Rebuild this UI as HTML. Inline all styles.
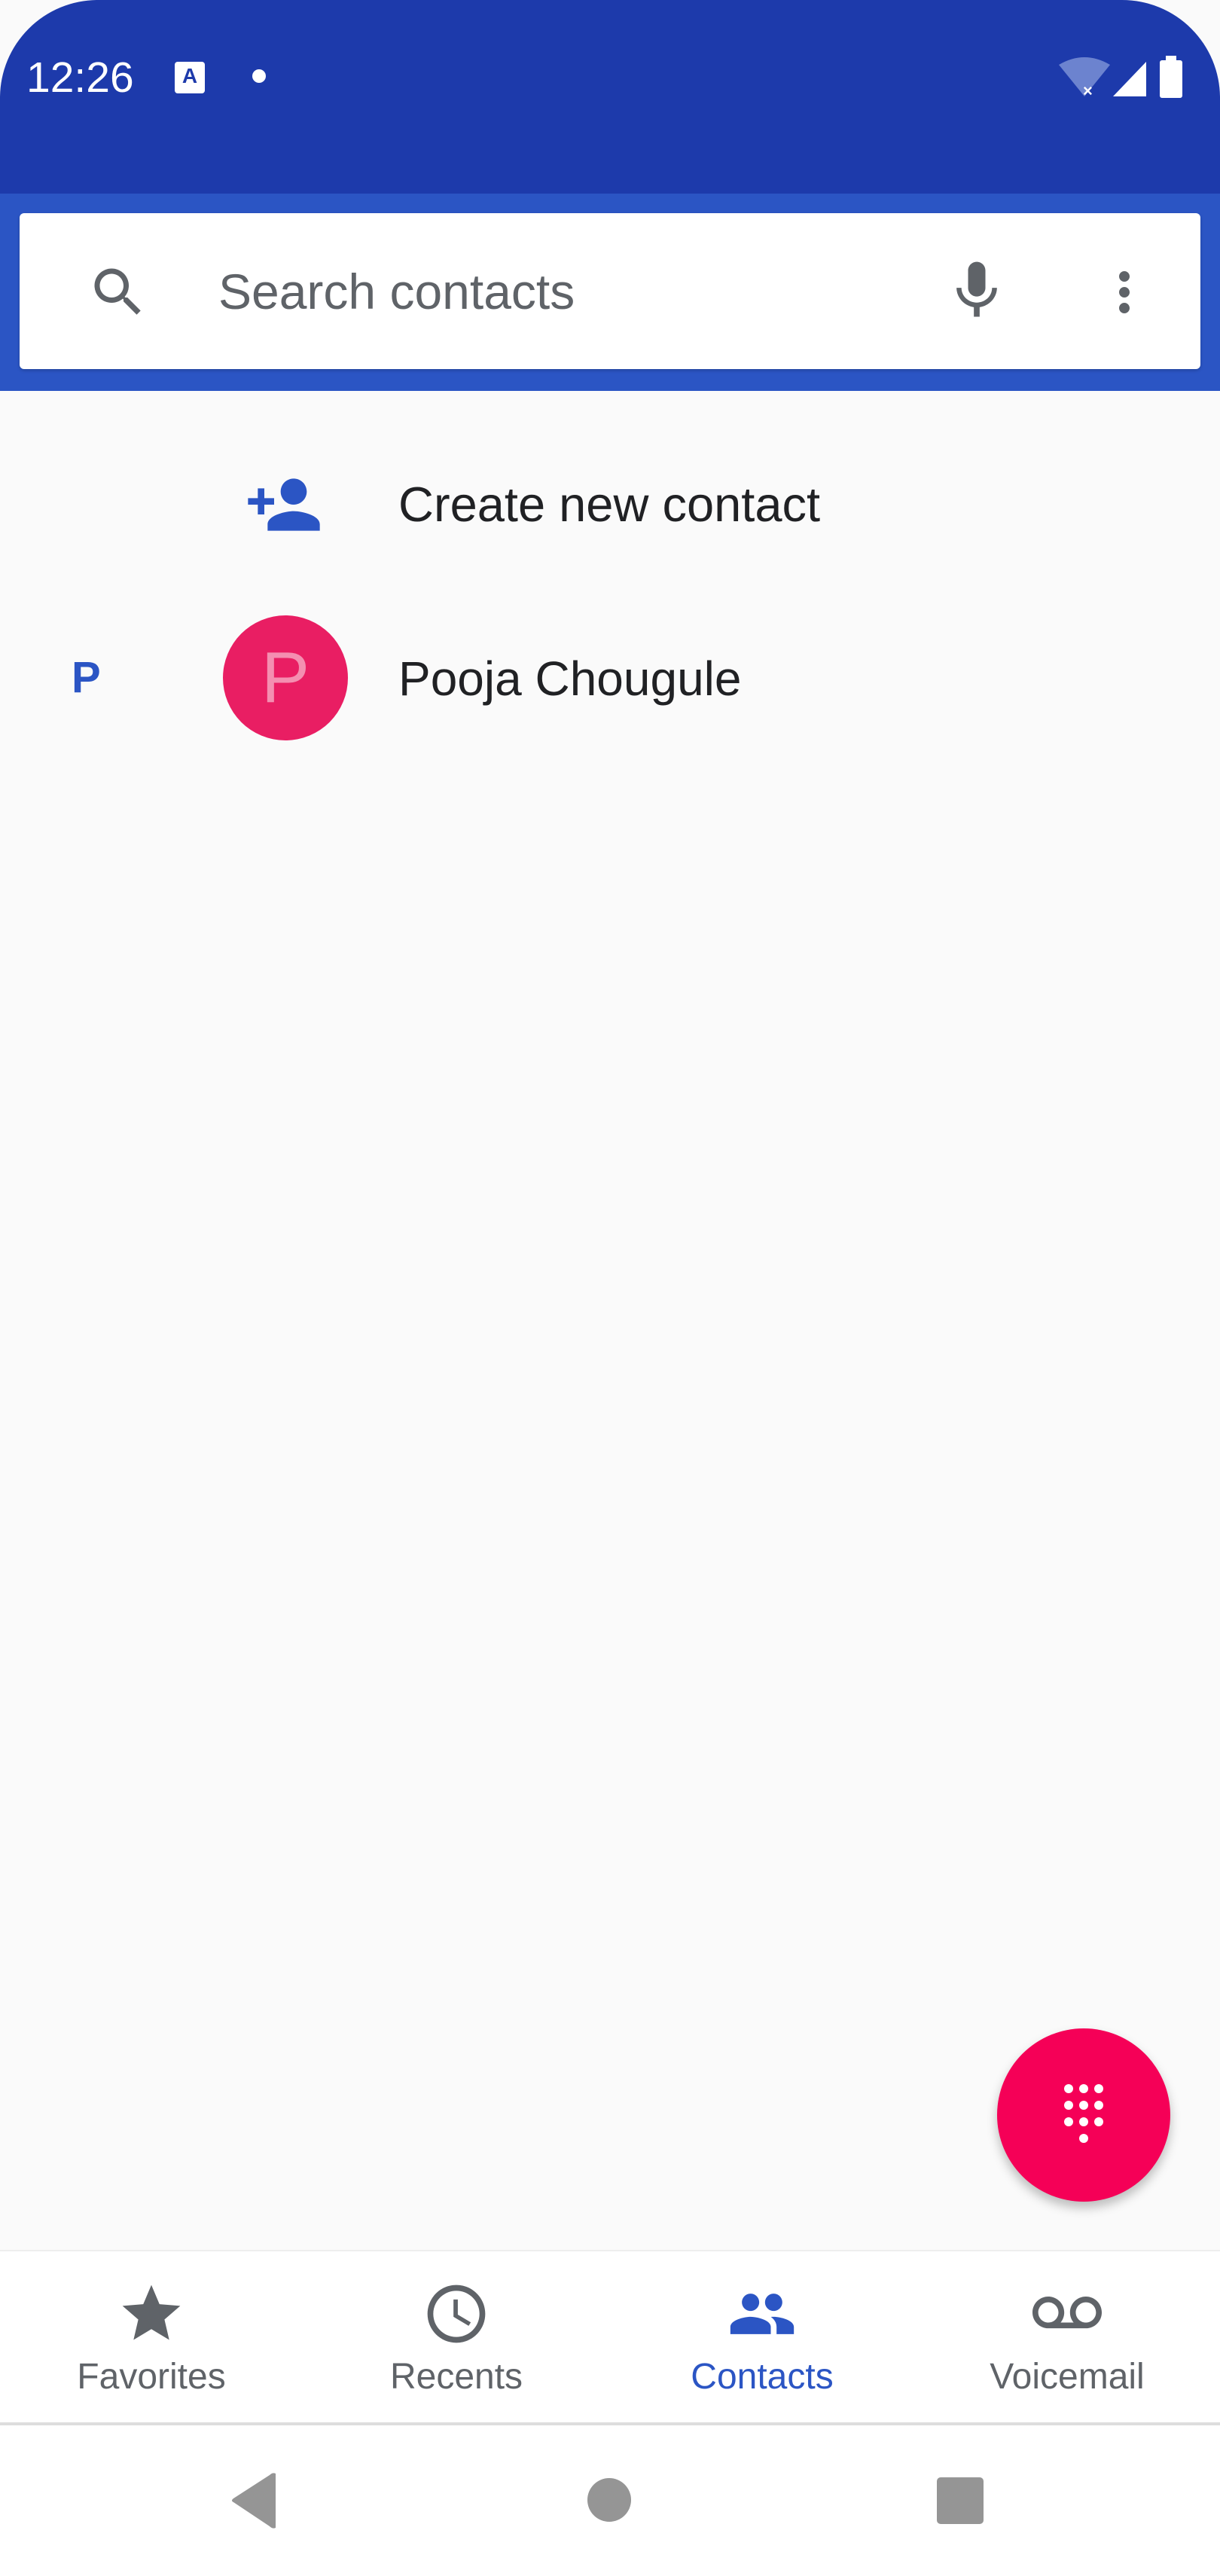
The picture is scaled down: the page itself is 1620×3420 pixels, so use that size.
<!DOCTYPE html>
<html><head><meta charset="utf-8"><style>
*{margin:0;padding:0;box-sizing:border-box}
body{width:1620px;height:3420px;background:#fff;font-family:"Liberation Sans",sans-serif;position:relative;overflow:hidden}
.abs{position:absolute}
</style></head><body>
<div class="abs" style="left:0;top:0;width:1620px;height:3000px;background:#fafafa"></div>
<div class="abs" style="left:0;top:0;width:1620px;height:257px;background:#1d3aab;border-radius:130px 130px 0 0"></div>
<div class="abs" style="left:0;top:257px;width:1620px;height:262px;background:#2b55c4"></div>
<div class="abs" style="left:35px;top:70px;color:#fff;font-size:57px">12:26</div>
<div class="abs" style="left:232px;top:82px;width:40px;height:42px;background:#fff;border-radius:4px;color:#1d3aab;font-size:28px;font-weight:bold;text-align:center;line-height:38px">A</div>
<div class="abs" style="left:335px;top:92px;width:18px;height:18px;background:#fff;border-radius:50%"></div>
<svg class="abs" style="left:1400px;top:72px" width="200" height="62" viewBox="0 0 200 62">
<path d="M6 14 Q40 -6 74 14 L40 56 Z" fill="#6c83cf"/>
<text x="38" y="56" fill="#fff" font-size="22" font-family="Liberation Sans" font-weight="bold">×</text>
<path d="M78 56 L122 10 L122 56 Z" fill="#fff"/>
<rect x="140" y="8" width="30" height="50" rx="3" fill="#fff"/><rect x="148" y="2" width="14" height="8" fill="#fff"/>
</svg>
<div class="abs" style="left:26px;top:283px;width:1568px;height:207px;background:#fff;border-radius:6px;box-shadow:0 2px 4px rgba(0,0,0,.2)"></div>
<svg class="abs" style="left:115px;top:346px" width="84" height="84" viewBox="0 0 24 24"><path fill="#5f6368" d="M15.5 14h-.79l-.28-.27A6.47 6.47 0 0 0 16 9.5 6.5 6.5 0 1 0 9.5 16c1.61 0 3.09-.59 4.23-1.57l.27.28v.79l5 4.99L20.49 19l-4.99-5zm-6 0C7.01 14 5 11.99 5 9.5S7.01 5 9.5 5 14 7.01 14 9.5 11.99 14 9.5 14z"/></svg>
<div class="abs" style="left:290px;top:349px;font-size:66px;color:#5f6368">Search contacts</div>
<svg class="abs" style="left:1251px;top:340px" width="92" height="92" viewBox="0 0 24 24"><path fill="#5f6368" d="M12 14c1.66 0 3-1.34 3-3V5c0-1.66-1.34-3-3-3S9 3.34 9 5v6c0 1.66 1.34 3 3 3zm5.3-3c0 3-2.54 5.1-5.3 5.1S6.7 14 6.7 11H5c0 3.41 2.72 6.23 6 6.72V21h2v-3.28c3.28-.48 6-3.3 6-6.72h-1.7z"/></svg>
<svg class="abs" style="left:1451px;top:346px" width="84" height="84" viewBox="0 0 24 24"><path fill="#5f6368" d="M12 8c1.1 0 2-.9 2-2s-.9-2-2-2-2 .9-2 2 .9 2 2 2zm0 2c-1.1 0-2 .9-2 2s.9 2 2 2 2-.9 2-2-.9-2-2-2zm0 6c-1.1 0-2 .9-2 2s.9 2 2 2 2-.9 2-2-.9-2-2-2z"/></svg>
<svg class="abs" style="left:325px;top:618px" width="104" height="104" viewBox="0 0 24 24"><path fill="#2b55c4" d="M15 12c2.21 0 4-1.79 4-4s-1.79-4-4-4-4 1.79-4 4 1.79 4 4 4zm-9-2V7H4v3H1v2h3v3h2v-3h3v-2H6zm9 4c-2.67 0-8 1.34-8 4v2h16v-2c0-2.66-5.33-4-8-4z"/></svg>
<div class="abs" style="left:529px;top:632px;font-size:65px;color:#202124">Create new contact</div>
<div class="abs" style="left:95px;top:866px;font-size:58px;font-weight:bold;color:#2b55c4">P</div>
<div class="abs" style="left:296px;top:817px;width:166px;height:166px;border-radius:50%;background:#e91e63;color:#f48fb1;font-size:96px;text-align:center;line-height:166px">P</div>
<div class="abs" style="left:529px;top:864px;font-size:64px;color:#202124">Pooja Chougule</div>
<div class="abs" style="left:1324px;top:2693px;width:230px;height:230px;border-radius:50%;background:#f50057;box-shadow:0 8px 14px rgba(0,0,0,.25)"></div>
<svg class="abs" style="left:1399px;top:2763px" width="80" height="90" viewBox="0 0 80 90">
<g fill="#fff"><circle cx="20" cy="10" r="6"/><circle cx="40" cy="10" r="6"/><circle cx="60" cy="10" r="6"/><circle cx="20" cy="32" r="6"/><circle cx="40" cy="32" r="6"/><circle cx="60" cy="32" r="6"/><circle cx="20" cy="54" r="6"/><circle cx="40" cy="54" r="6"/><circle cx="60" cy="54" r="6"/><circle cx="40" cy="76" r="6"/></g></svg>
<div class="abs" style="left:0;top:2987px;width:1620px;height:233px;background:#fff;border-top:2px solid #eee;border-bottom:4px solid #ddd"></div>
<svg class="abs" style="left:155px;top:3026px" width="92" height="92" viewBox="0 0 24 24"><path fill="#5f6368" d="M12 17.27L18.18 21l-1.64-7.03L22 9.24l-7.19-.61L12 2 9.19 8.63 2 9.24l5.46 4.73L5.82 21z"/></svg>
<svg class="abs" style="left:560px;top:3026px" width="92" height="92" viewBox="0 0 24 24"><path fill="#5f6368" d="M11.99 2C6.47 2 2 6.480 2 12s4.47 10 9.990 10C17.52 22 22 17.52 22 12S17.52 2 11.99 2zM12 20c-4.42 0-8-3.58-8-8s3.58-8 8-8 8 3.58 8 8-3.58 8-8 8zm.5-13H11v6l5.25 3.15.75-1.230-4.5-2.67z"/></svg>
<svg class="abs" style="left:966px;top:3026px" width="92" height="92" viewBox="0 0 24 24"><path fill="#2b55c4" d="M16 11c1.66 0 2.99-1.34 2.99-3S17.66 5 16 5c-1.66 0-3 1.34-3 3s1.34 3 3 3zm-8 0c1.66 0 2.99-1.34 2.99-3S9.66 5 8 5C6.34 5 5 6.34 5 8s1.34 3 3 3zm0 2c-2.33 0-7 1.17-7 3.5V19h14v-2.5c0-2.33-4.67-3.5-7-3.5zm8 0c-.29 0-.62.02-.97.05 1.16.84 1.97 1.970 1.97 3.45V19h6v-2.5c0-2.33-4.67-3.5-7-3.5z"/></svg>
<svg class="abs" style="left:1371px;top:3026px" width="92" height="92" viewBox="0 0 24 24"><path fill="#5f6368" d="M18.5 6C15.46 6 13 8.46 13 11.5c0 1.33.47 2.55 1.26 3.5H9.74c.79-.95 1.26-2.17 1.26-3.5C11 8.46 8.54 6 5.5 6S0 8.46 0 11.5 2.46 17 5.5 17h13c3.04 0 5.5-2.46 5.5-5.5S21.54 6 18.5 6zm-13 9C3.57 15 2 13.43 2 11.5S3.57 8 5.5 8 9 9.57 9 11.5 7.43 15 5.5 15zm13 0c-1.93 0-3.5-1.57-3.5-3.5S16.57 8 18.5 8 22 9.57 22 11.5 20.43 15 18.5 15z"/></svg>
<div class="abs" style="left:0;top:3128px;width:402px;text-align:center;font-size:48px;color:#5f6368">Favorites</div>
<div class="abs" style="left:406px;top:3128px;width:400px;text-align:center;font-size:48px;color:#5f6368">Recents</div>
<div class="abs" style="left:812px;top:3128px;width:400px;text-align:center;font-size:48px;color:#2b55c4">Contacts</div>
<div class="abs" style="left:1217px;top:3128px;width:400px;text-align:center;font-size:48px;color:#5f6368">Voicemail</div>
<svg class="abs" style="left:300px;top:3280px" width="80" height="80" viewBox="0 0 80 80"><path d="M66 4 L66 76 Q62 78 58 74 L10 42 Q6 40 10 37 L58 6 Q62 2 66 4Z" fill="#959595"/></svg>
<div class="abs" style="left:780px;top:3290px;width:58px;height:58px;border-radius:50%;background:#959595"></div>
<div class="abs" style="left:1244px;top:3289px;width:62px;height:62px;border-radius:5px;background:#959595"></div>
</body></html>
